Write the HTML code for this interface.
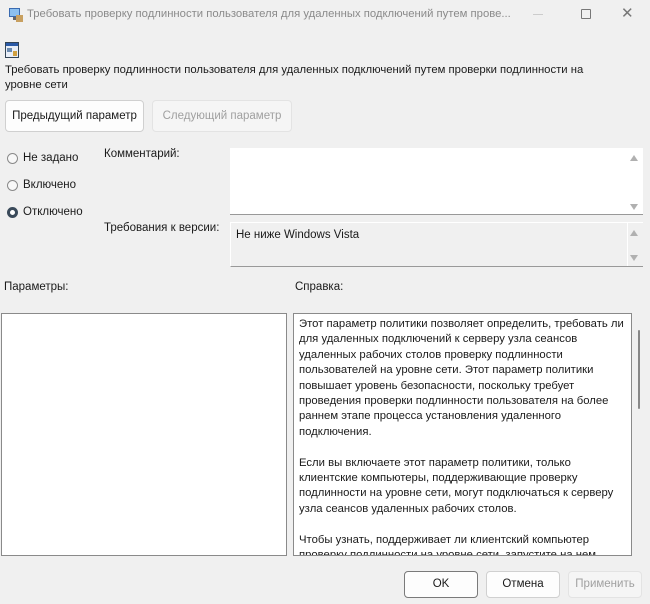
<!DOCTYPE html>
<html><head><meta charset="utf-8"><style>
*{margin:0;padding:0;box-sizing:border-box}
body{width:650px;height:604px;background:#f0f0f0;font-family:"Liberation Sans","DejaVu Sans",sans-serif;font-size:11.5px;color:#1a1a1a;position:relative;overflow:hidden}
.a{position:absolute;white-space:nowrap}
.btn{position:absolute;background:#fdfdfd;border:1px solid #d0d0d0;border-radius:4px;text-align:center;font-size:11.5px}
.dis{background:#f5f5f5;border-color:#e3e3e3;color:#a0a0a0}
.rad{position:absolute;width:11px;height:11px;border-radius:50%;border:1px solid #8a8a8a;background:#f8f8f8}
.arr{position:absolute;width:0;height:0;border-left:4px solid transparent;border-right:4px solid transparent}
</style></head><body>
<svg class="a" style="left:8px;top:7px" width="16" height="16"><rect x="1" y="1" width="11" height="9" fill="#3a6ab0"/><rect x="2" y="2" width="9" height="7" fill="#8cc0f0"/><rect x="5" y="10" width="4" height="3" fill="#666"/><rect x="8" y="8" width="7" height="7" fill="#c8a060"/></svg>
<div class="a" style="left:27px;top:8px;color:#8a8a8a;font-size:11.3px">Требовать проверку подлинности пользователя для удаленных подключений путем прове...</div>
<div class="a" style="left:533px;top:14px;width:10px;height:1px;background:#ccc"></div>
<div class="a" style="left:581px;top:9px;width:10px;height:10px;border:1px solid #777;border-radius:1px"></div>
<div class="a" style="left:621px;top:4px;color:#777;font-size:15px">✕</div>
<svg class="a" style="left:5px;top:42px" width="14" height="16"><rect x="0.5" y="0.5" width="13" height="15" fill="#e8eef8" stroke="#345"/><rect x="1" y="1" width="12" height="3" fill="#2a5aa8"/><rect x="2" y="6" width="5" height="4" fill="#6a8ab0"/><rect x="8" y="9" width="4" height="5" fill="#d0a040"/></svg>
<div class="a" style="left:5px;top:63px;line-height:15px;font-size:11.3px">Требовать проверку подлинности пользователя для удаленных подключений путем проверки подлинности на<br>уровне сети</div>
<div class="btn" style="left:5px;top:100px;width:139px;height:32px;line-height:30px">Предыдущий параметр</div>
<div class="btn dis" style="left:152px;top:100px;width:140px;height:32px;line-height:30px">Следующий параметр</div>
<div class="rad" style="left:7px;top:153px"></div><div class="a" style="left:23px;top:152px">Не задано</div>
<div class="rad" style="left:7px;top:180px"></div><div class="a" style="left:23px;top:179px">Включено</div>
<div class="rad" style="left:7px;top:207px;border:3.5px solid #3a4a5a;background:#fff"></div><div class="a" style="left:23px;top:206px">Отключено</div>
<div class="a" style="left:104px;top:148px">Комментарий:</div>
<div class="a" style="left:230px;top:148px;width:413px;height:67px;background:#fff;border-bottom:1px solid #999"></div>
<div class="arr" style="left:630px;top:155px;border-bottom:6px solid #b0b0b0"></div>
<div class="arr" style="left:630px;top:204px;border-top:6px solid #b0b0b0"></div>
<div class="a" style="left:104px;top:222px">Требования к версии:</div>
<div class="a" style="left:230px;top:222px;width:413px;height:45px;background:#f0f0f0;border-bottom:1px solid #999;border-left:1px solid #fff;border-top:1px solid #fff"></div>
<div class="a" style="left:627px;top:223px;width:1px;height:43px;background:#fff"></div>
<div class="a" style="left:236px;top:229px">Не ниже Windows Vista</div>
<div class="arr" style="left:630px;top:230px;border-bottom:6px solid #b0b0b0"></div>
<div class="arr" style="left:630px;top:255px;border-top:6px solid #b0b0b0"></div>
<div class="a" style="left:4px;top:281px">Параметры:</div>
<div class="a" style="left:295px;top:281px">Справка:</div>
<div class="a" style="left:1px;top:313px;width:286px;height:243px;background:#fff;border:1px solid #8a8a8a"></div>
<div class="a" style="left:293px;top:313px;width:339px;height:243px;background:#fff;border:1px solid #8a8a8a;overflow:hidden;padding:3px 0 0 5px;line-height:15.4px;font-size:11.3px;white-space:normal">Этот параметр политики позволяет определить, требовать ли<br>для удаленных подключений к серверу узла сеансов<br>удаленных рабочих столов проверку подлинности<br>пользователей на уровне сети. Этот параметр политики<br>повышает уровень безопасности, поскольку требует<br>проведения проверки подлинности пользователя на более<br>раннем этапе процесса установления удаленного<br>подключения.<br><br>Если вы включаете этот параметр политики, только<br>клиентские компьютеры, поддерживающие проверку<br>подлинности на уровне сети, могут подключаться к серверу<br>узла сеансов удаленных рабочих столов.<br><br>Чтобы узнать, поддерживает ли клиентский компьютер<br>проверку подлинности на уровне сети, запустите на нем</div>
<div class="a" style="left:638px;top:330px;width:2px;height:79px;background:#888;border-radius:1px"></div>
<div class="btn" style="left:404px;top:571px;width:74px;height:27px;line-height:25px;border-color:#7a7a7a">OK</div>
<div class="btn" style="left:486px;top:571px;width:74px;height:27px;line-height:25px">Отмена</div>
<div class="btn dis" style="left:568px;top:571px;width:74px;height:27px;line-height:25px">Применить</div>
</body></html>
